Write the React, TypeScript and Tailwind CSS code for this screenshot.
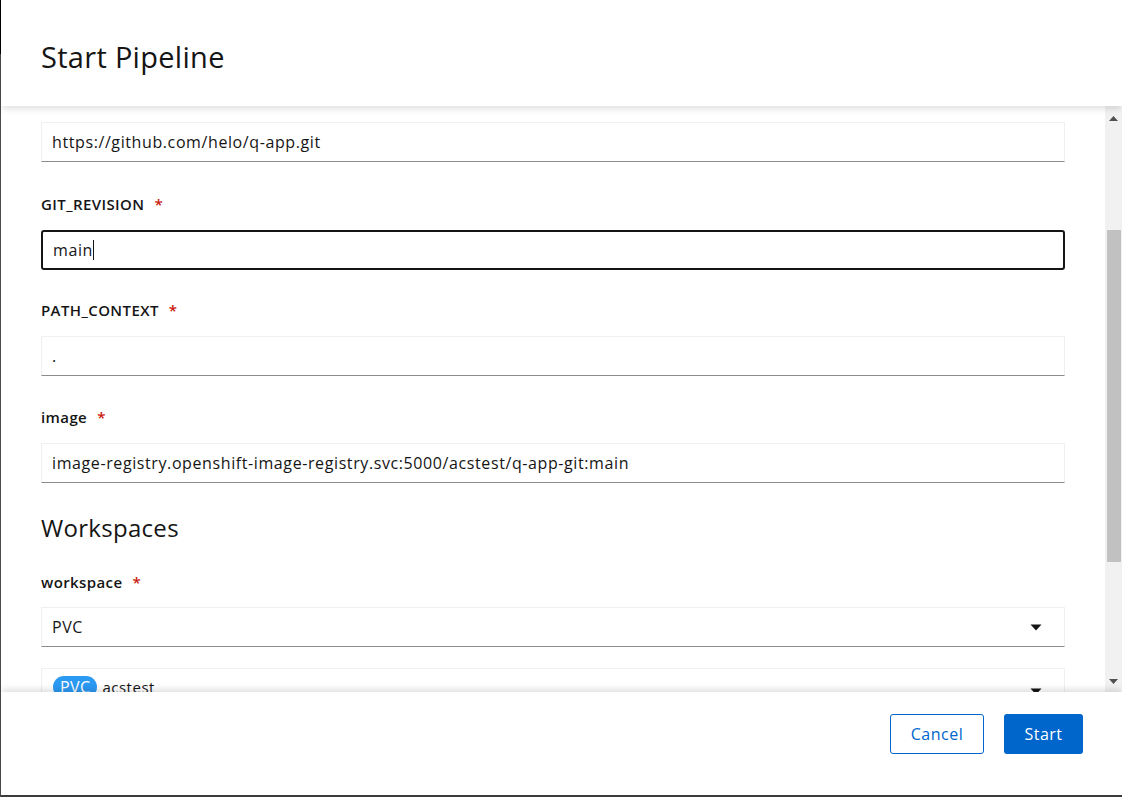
import React from 'react'

const font = { fontFamily: '"Open Sans", "Liberation Sans", sans-serif' }

function Label({ text, mb = 'mb-[15px]' }: { text: string; mb?: string }) {
  return (
    <div className={`flex items-center h-[21px] ${mb} text-[15px] leading-[21px] font-semibold tracking-[0.4px] text-[#151515]`}>
      <span>{text}</span>
      <span className="ml-[10px] text-[#c9190b]">*</span>
    </div>
  )
}

function TextInput({ value, focused }: { value: string; focused?: boolean }) {
  if (focused) {
    return (
      <div className="h-[40px] flex items-center px-[10px] border-2 border-[#151515] rounded-[3px] text-[16px] tracking-[0.6px] text-[#151515]">
        <span>{value}</span>
        <span className="w-px h-[20px] bg-[#151515]" />
      </div>
    )
  }
  return (
    <div className="h-[40px] flex items-center px-[10px] border border-[#f0f0f0] border-b-[#8a8d90] text-[16px] tracking-[0.6px] text-[#151515]">
      {value}
    </div>
  )
}

function Caret() {
  return (
    <svg width="12" height="7" viewBox="0 0 12 7" className="shrink-0">
      <path d="M0.5 0.5 H11.5 L6 6.5 Z" fill="#151515" />
    </svg>
  )
}

function Field({ label, value, focused, mt = 'mt-[31px]' }: { label: string; value: string; focused?: boolean; mt?: string }) {
  return (
    <div className={mt}>
      <Label text={label} />
      <TextInput value={value} focused={focused} />
    </div>
  )
}

function Scrollbar() {
  return (
    <div className="w-[17px] bg-[#f1f1f1] flex flex-col items-center">
      <div className="h-[17px] flex items-center justify-center mt-[4px]">
        <svg width="9" height="5" viewBox="0 0 9 5"><path d="M0 5 L4.5 0 L9 5 Z" fill="#505050" /></svg>
      </div>
      <div className="h-[103px]" />
      <div className="w-[14px] h-[332px] bg-[#c1c1c1] ml-[1px]" />
      <div className="flex-1" />
      <div className="h-[17px] flex items-center justify-center mb-[2px]">
        <svg width="9" height="5" viewBox="0 0 9 5"><path d="M0 0 L9 0 L4.5 5 Z" fill="#505050" /></svg>
      </div>
    </div>
  )
}

export default function App() {
  return (
    <div className="w-[1122px] h-[797px] bg-[#3c3c3c] flex overflow-hidden" style={font}>
      <div className="w-px flex flex-col">
        <div className="h-[54px] bg-black" />
        <div className="flex-1 bg-[#4a4a4a]" />
      </div>
      <div className="flex-1 flex flex-col h-[795px] bg-white">
        {/* header */}
        <div className="h-[106px] shrink-0 relative z-10 bg-white shadow-[0_4px_6px_-1px_rgba(0,0,0,0.12)] pl-[40px] flex items-center">
          <h1 className="text-[29px] leading-none text-[#151515] tracking-[0.3px] mt-[7px]">Start Pipeline</h1>
        </div>

        {/* body */}
        <div className="flex-1 flex min-h-0">
          <div className="flex-1 min-h-0 overflow-hidden pl-[40px] pr-[40px] pt-[16px]">
            <TextInput value="https://github.com/helo/q-app.git" />
            <Field label="GIT_REVISION" value="main" focused mt="mt-[32px]" />
            <Field label="PATH_CONTEXT" value="." mt="mt-[30px]" />
            <Field label="image" value="image-registry.openshift-image-registry.svc:5000/acstest/q-app-git:main" />

            <h2 className="mt-[29px] h-[31px] leading-[31px] text-[24px] tracking-[0.3px] text-[#151515]">Workspaces</h2>

            <div className="mt-[29px]">
              <Label text="workspace" mb="mb-[14px]" />
              <div className="h-[40px] flex items-center justify-between pl-[10px] pr-[22px] border border-[#f0f0f0] border-b-[#8a8d90] text-[16px] tracking-[0.6px] text-[#151515]">
                <span>PVC</span>
                <Caret />
              </div>
              <div className="mt-[21px] h-[40px] flex items-start justify-between pl-[11px] pr-[22px] pt-[7px] border border-[#f0f0f0] border-b-[#8a8d90]">
                <div className="flex items-center gap-[5px]">
                  <span className="h-[22px] px-[7px] rounded-full bg-[#2b9af3] text-white text-[16px] tracking-[0.4px] leading-[22px]">PVC</span>
                  <span className="text-[15px] tracking-[0.5px] text-[#151515]">acstest</span>
                </div>
                <div className="mt-[12px]"><Caret /></div>
              </div>
            </div>
          </div>
          <Scrollbar />
        </div>

        {/* footer */}
        <div className="h-[103px] shrink-0 relative z-10 bg-white shadow-[0_-4px_6px_-1px_rgba(0,0,0,0.12)] flex items-start justify-end gap-[20px] pt-[22px] pr-[39px]">
          <button className="h-[40px] w-[94px] rounded-[3px] border border-[#0066cc] text-[#0066cc] text-[16px] tracking-[0.5px]">Cancel</button>
          <button className="h-[40px] w-[79px] rounded-[3px] bg-[#0066cc] text-white text-[16px] tracking-[0.5px]">Start</button>
        </div>
      </div>
    </div>
  )
}
